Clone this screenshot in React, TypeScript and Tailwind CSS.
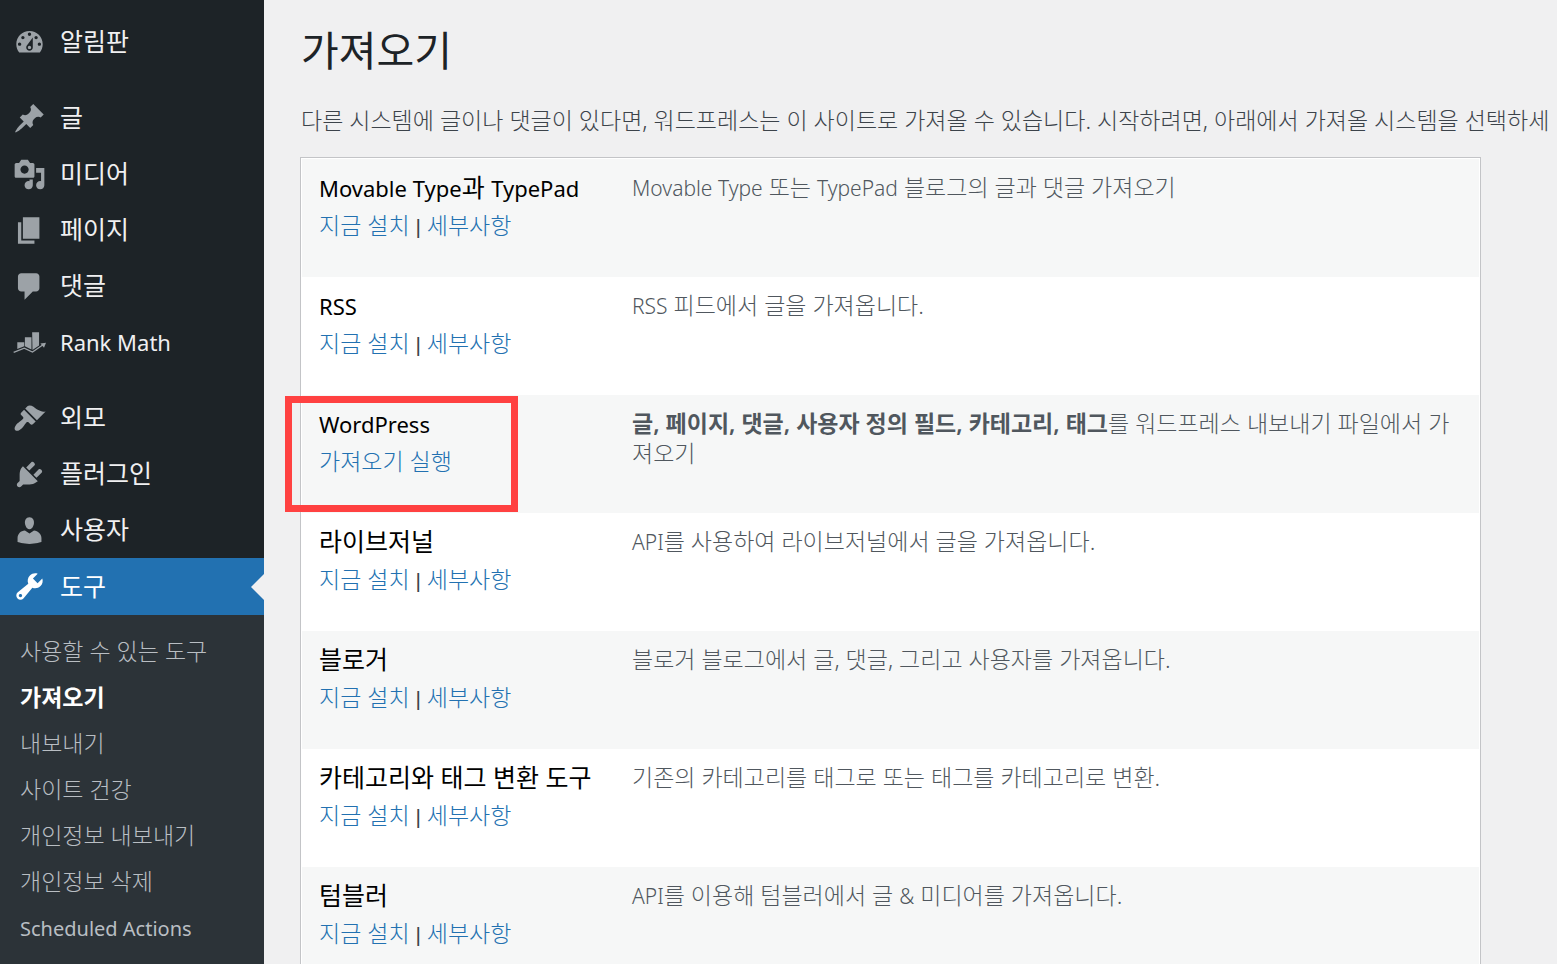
import type { ReactNode } from "react";

const menuGroups = [
  [{ label: "알림판", icon: "dashboard" }],
  [
    { label: "글", icon: "post" },
    { label: "미디어", icon: "media" },
    { label: "페이지", icon: "page" },
    { label: "댓글", icon: "comments" },
    { label: "Rank Math", icon: "rankmath" },
  ],
  [
    { label: "외모", icon: "appearance" },
    { label: "플러그인", icon: "plugins" },
    { label: "사용자", icon: "users" },
  ],
];

const toolLinks = [
  "사용할 수 있는 도구",
  "가져오기",
  "내보내기",
  "사이트 건강",
  "개인정보 내보내기",
  "개인정보 삭제",
  "Scheduled Actions",
];

const iconPaths: Record<string, string> = {
  dashboard:
    "M3.76 16h12.48c1.1-1.37 1.76-3.11 1.76-5 0-4.42-3.58-8-8-8s-8 3.58-8 8c0 1.89.66 3.63 1.76 5zM10 4c.55 0 1 .45 1 1s-.45 1-1 1-1-.45-1-1 .45-1 1-1zM6 6c.55 0 1 .45 1 1s-.45 1-1 1-1-.45-1-1 .45-1 1-1zm8 0c.55 0 1 .45 1 1s-.45 1-1 1-1-.45-1-1 .45-1 1-1zm-5.37 5.55L12 7v6c0 1.1-.9 2-2 2s-2-.9-2-2c0-.57.24-1.08.63-1.45zM4 10c.55 0 1 .45 1 1s-.45 1-1 1-1-.45-1-1 .45-1 1-1zm12 0c.55 0 1 .45 1 1s-.45 1-1 1-1-.45-1-1 .45-1 1-1zm-5 3c0-.55-.45-1-1-1s-1 .45-1 1 .45 1 1 1 1-.45 1-1z",
  post: "M10.44 3.02l1.82-1.82 6.36 6.35-1.83 1.82c-1.05-.68-2.48-.57-3.41.36l-.75.75c-.92.93-1.04 2.35-.35 3.41l-1.83 1.82-2.41-2.41-2.8 2.79c-.42.42-3.38 2.71-3.8 2.29s1.86-3.39 2.28-3.81l2.79-2.79L4.1 9.36l1.83-1.82c1.05.69 2.48.57 3.4-.36l.75-.75c.93-.92 1.05-2.35.36-3.41z",
  media:
    "M13 11V4c0-.55-.45-1-1-1h-1.67L9 1H5L3.67 3H2c-.55 0-1 .45-1 1v7c0 .55.45 1 1 1h10c.55 0 1-.45 1-1zM7 4.5c1.38 0 2.5 1.12 2.5 2.5S8.38 9.5 7 9.5 4.5 8.38 4.5 7 5.62 4.5 7 4.5zM14 6h5v10.5c0 1.38-1.12 2.5-2.5 2.5S14 17.88 14 16.5s1.12-2.5 2.5-2.5c.17 0 .34.02.5.05V9h-3V6zm-4 8.05V13h2v3.5c0 1.38-1.12 2.5-2.5 2.5S7 17.88 7 16.5 8.12 14 9.5 14c.17 0 .34.02.5.05z",
  page: "M6 15V2h10v13H6zm-1 1h8v2H3V5h2v11z",
  comments:
    "M5 2h9c1.1 0 2 .9 2 2v7c0 1.1-.9 2-2 2h-2l-5 5v-5H5c-1.1 0-2-.9-2-2V4c0-1.1.9-2 2-2z",
  appearance:
    "M14.48 11.06L7.41 3.99l1.5-1.5c.5-.56 2.3-.47 3.51.32 1.21.8 1.43 1.28 2.91 2.1 1.18.64 2.45 1.26 4.45.85zm-.71.71L6.7 4.7 4.93 6.47c-.39.39-.39 1.02 0 1.41l1.06 1.06c.39.39.39 1.03 0 1.42-.6.6-1.43 1.11-2.21 1.69-.35.26-.7.53-1.01.84C1.43 14.23.4 16.08 1.4 17.07c.99 1 2.84-.03 4.18-1.36.31-.31.58-.66.85-1.02.57-.78 1.08-1.61 1.69-2.21.39-.39 1.02-.39 1.41 0l1.06 1.06c.39.39 1.02.39 1.41 0z",
  plugins:
    "M13.11 4.36L9.87 7.6 8 5.73l3.24-3.24c.35-.34 1.05-.2 1.56.32.52.51.66 1.21.31 1.55zm-8 1.77l.91-1.12 9.01 9.01-1.19.84c-.71.71-2.63 1.16-3.82 1.16H6.14L4.9 17.26c-.59.59-1.54.59-2.12 0-.59-.58-.59-1.53 0-2.12l1.24-1.24v-3.88c0-1.13.4-3.19 1.09-3.89zm7.26 3.97l3.24-3.24c.34-.35 1.04-.21 1.55.31.52.51.66 1.21.31 1.55l-3.24 3.25z",
  users:
    "M10 9.25c-2.27 0-2.73-3.44-2.73-3.44C7 4.02 7.82 2 9.97 2c2.16 0 2.98 2.02 2.71 3.81 0 0-.41 3.44-2.68 3.44zm0 2.57L12.72 10c2.39 0 4.52 2.33 4.52 4.53v2.49s-3.65 1.13-7.24 1.13c-3.65 0-7.24-1.13-7.24-1.13v-2.49c0-2.25 1.94-4.48 4.47-4.48z",
  tools:
    "M16.68 9.77c-1.34 1.34-3.3 1.67-4.95.99l-5.41 6.52c-.99.99-2.59.99-3.58 0s-.99-2.59 0-3.57l6.52-5.42c-.68-1.65-.35-3.61.99-4.95 1.28-1.28 3.12-1.62 4.72-1.06l-2.89 2.89 2.82 2.82 2.86-2.87c.53 1.58.18 3.39-1.08 4.65zM3.81 16.21c.4.39 1.04.39 1.43 0 .4-.4.4-1.04 0-1.43-.39-.4-1.03-.4-1.43 0-.39.39-.39 1.03 0 1.43z",
};

const importers: { name: string; description: ReactNode; installed?: boolean }[] = [
  {
    name: "Movable Type과 TypePad",
    description: <Mixed text="Movable Type 또는 TypePad 블로그의 글과 댓글 가져오기" />,
  },
  { name: "RSS", description: <Mixed text="RSS 피드에서 글을 가져옵니다." /> },
  {
    name: "WordPress",
    installed: true,
    description: (
      <>
        <strong className="font-semibold">글, 페이지, 댓글, 사용자 정의 필드, 카테고리, 태그</strong>를
        워드프레스 내보내기 파일에서 가져오기
      </>
    ),
  },
  {
    name: "라이브저널",
    description: <Mixed text="API를 사용하여 라이브저널에서 글을 가져옵니다." />,
  },
  { name: "블로거", description: "블로거 블로그에서 글, 댓글, 그리고 사용자를 가져옵니다." },
  {
    name: "카테고리와 태그 변환 도구",
    description: "기존의 카테고리를 태그로 또는 태그를 카테고리로 변환.",
  },
  {
    name: "텀블러",
    description: <Mixed text="API를 이용해 텀블러에서 글 & 미디어를 가져옵니다." />,
  },
];

function Mixed({ text, latin = "text-[21px]" }: { text: string; latin?: string }) {
  return (
    <>
      {text.split(/([A-Za-z&]+(?: [A-Za-z]+)*)/).map((part, i) =>
        i % 2 ? (
          <span key={i} className={`${latin} leading-none`}>
            {part}
          </span>
        ) : (
          part
        )
      )}
    </>
  );
}

function MenuIcon({ name }: { name: string }) {
  if (name === "rankmath") {
    return (
      <svg viewBox="38 362 100 100" className="size-[33px] shrink-0" fill="currentColor" aria-hidden="true">
        <path d="M51 411h21v12l-21 9zM74 396h20v37l-20-10zM96 381h21v40l-20 14z" />
        <path d="M40 442l32-13 25 12 32-22" fill="none" stroke="currentColor" strokeWidth="4" />
        <path d="M121 415l17-2-6 15z" />
      </svg>
    );
  }
  return (
    <svg viewBox="0 0 20 20" className="size-[33px] shrink-0" fill="currentColor" fillRule="evenodd" aria-hidden="true">
      <path d={iconPaths[name]} />
    </svg>
  );
}

function Sidebar() {
  return (
    <nav className="flex w-[264px] shrink-0 flex-col bg-[#1d2327] pt-3.5 text-[#f0f0f1]">
      {menuGroups.map((group, i) => (
        <ul key={i} className="mb-5 last-of-type:mb-0">
          {group.map((item) => (
            <li key={item.label}>
              <a href="#" className="flex h-14 items-center gap-3.5 pl-[13px] text-[25px]">
                <span className="text-[#9ca2a7]">
                  <MenuIcon name={item.icon} />
                </span>
                <span>
                  <Mixed text={item.label} latin="text-[22px]" />
                </span>
              </a>
            </li>
          ))}
        </ul>
      ))}
      <a
        href="#"
        className="relative flex h-[57px] shrink-0 items-center gap-3.5 bg-[#2271b1] pl-[13px] text-[25px] text-white"
      >
        <MenuIcon name="tools" />
        <span>도구</span>
        <span className="absolute top-1/2 right-0 -translate-y-1/2 border-y-[13px] border-r-[13px] border-y-transparent border-r-[#f0f0f1]" />
      </a>
      <div className="grow bg-[#2c3338] pt-[13px]">
        {toolLinks.map((label) => (
          <a
            key={label}
            href="#"
            className={
              label === "가져오기"
                ? "flex h-[46px] items-center pl-5 text-[23px] font-bold text-white"
                : "flex h-[46px] items-center pl-5 text-[23px] font-light text-[#b9bec3]"
            }
          >
            <span>
              <Mixed text={label} latin="text-[20px] font-normal" />
            </span>
          </a>
        ))}
      </div>
    </nav>
  );
}

function ImporterRow({ importer }: { importer: (typeof importers)[number] }) {
  return (
    <tr className="h-[118px] align-top odd:bg-[#f6f7f7]">
      <td className="relative w-[313px] pt-2.5 pl-[17px]">
        <div className="text-[25px] leading-9 whitespace-nowrap text-black">
          <Mixed text={importer.name} latin="text-[22px]" />
        </div>
        <div className="text-[23px] leading-10 font-light whitespace-nowrap">
          {importer.installed ? (
            <a href="#" className="text-[#2271b1]">가져오기 실행</a>
          ) : (
            <>
              <a href="#" className="text-[#2271b1]">지금 설치</a>
              <span className="font-['Liberation_Sans',sans-serif] text-[21px] leading-none"> | </span>
              <a href="#" className="text-[#2271b1]">세부사항</a>
            </>
          )}
        </div>
        {importer.installed && (
          <span className="pointer-events-none absolute top-px -left-[17px] h-[116px] w-[233px] border-[7px] border-[#ff4141]" />
        )}
      </td>
      <td className="pt-[13px] pr-4 pl-[17px] text-[23px] leading-[30px] font-light break-all text-[#50575e]">
        {importer.description}
      </td>
    </tr>
  );
}

export default function App() {
  return (
    <div className="flex min-h-screen bg-[#f0f0f1] font-['Noto_Sans','Noto_Sans_CJK_KR',sans-serif]" lang="ko">
      <Sidebar />
      <main className="min-w-0 grow overflow-hidden pl-9 text-[#3c434a]">
        <h1 className="pt-5 pl-px text-[41px] leading-[60px] font-normal text-[#1d2327]">가져오기</h1>
        <p className="mt-6 pl-px text-[23px] leading-8 font-light whitespace-nowrap">
          다른 시스템에 글이나 댓글이 있다면, 워드프레스는 이 사이트로 가져올 수 있습니다. 시작하려면, 아래에서 가져올 시스템을 선택하세
        </p>
        <div className="mt-[21px] mr-[76px] border border-[#c3c4c7] bg-white p-px">
          <table className="w-full table-fixed">
            <tbody>
              {importers.map((importer) => (
                <ImporterRow key={importer.name} importer={importer} />
              ))}
            </tbody>
          </table>
        </div>
      </main>
    </div>
  );
}
